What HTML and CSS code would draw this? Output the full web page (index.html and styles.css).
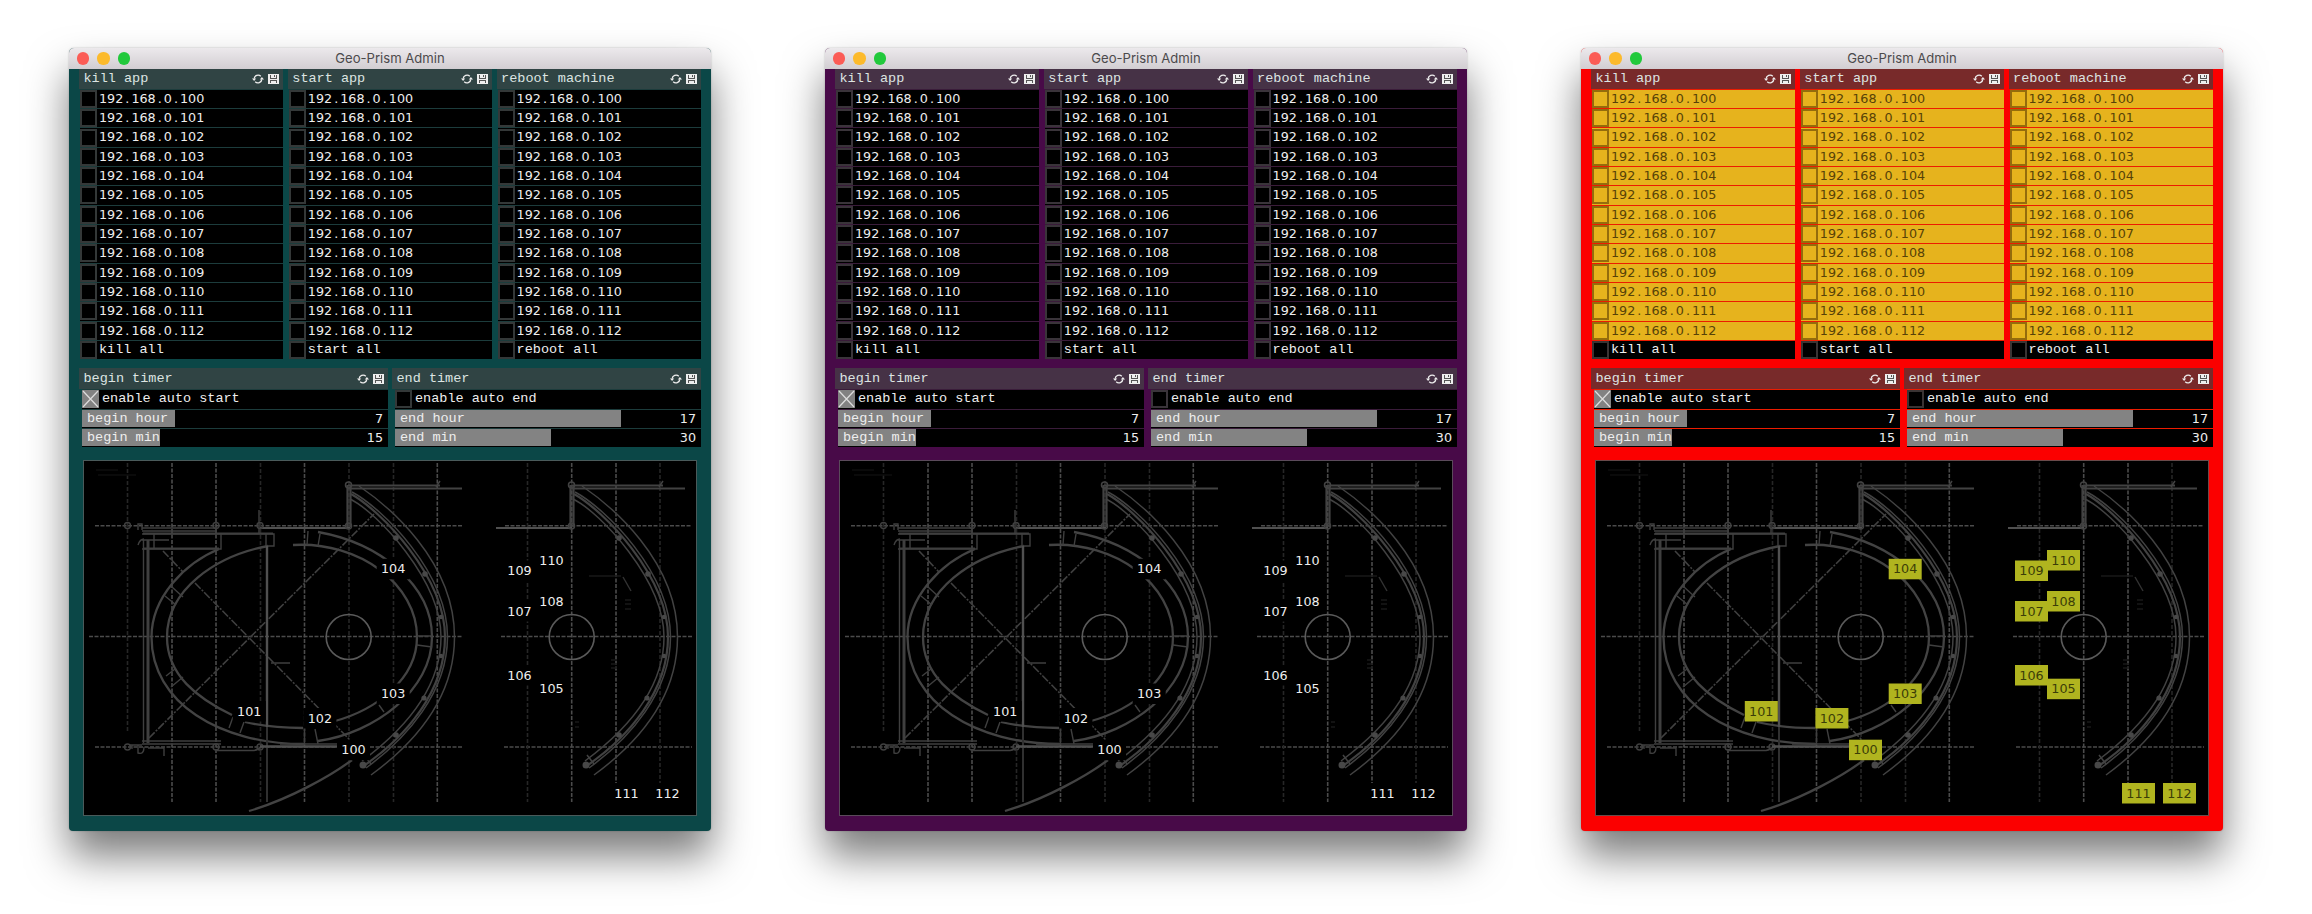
FILE: index.html
```html
<!DOCTYPE html>
<html lang="en">
<head>
<meta charset="utf-8">
<title>Geo-Prism Admin</title>
<link rel="stylesheet" href="styles.css">
</head>
<body>
<svg class="defs" width="0" height="0">
  <symbol id="refresh" viewBox="0 0 12 10">
    <path d="M2.200 4.600A3.900 3.600 0 0 1 8.800 2.200M9.800 5.400A3.900 3.600 0 0 1 3.200 7.800" fill="none" stroke="currentColor" stroke-width="1.300"/>
    <path d="M0 4.400h4.200L2.100 7zM7.800 5.600H12L9.900 3z" fill="currentColor"/>
  </symbol>
  <symbol id="save" viewBox="0 0 11 10">
    <path d="M0 0h11v10H0z" fill="currentColor"/>
    <path d="M2 1h1v3h5V1h1v4H2zM2 9V6h7v3H8V7H3v2zM6 1h1v2H6z" fill="#555"/>
  </symbol>
  <symbol id="curve" viewBox="0 0 900 900" overflow="visible">
    <g fill="none" stroke="#424242" stroke-width="1.500">
      <path d="M582 486C610 505 677.5 560 677.5 637C677.5 700 635 745 594 775"/>
      <path d="M575 492C605 508 670.5 572 670.5 637C670.5 692 630 738 589 768"/>
      <path d="M574 494C603 510 668 576 668 637C668 692 628 737 588 765" stroke-width="2.200"/>
      <path d="M573 499C600 512 664 580 664 637C664 690 624 732 585 761"/>
      <path d="M571 485.500h92M571 488.500h97M571 488.500h114" stroke-width="2"/>
      <path d="M570.500 485v42M573.500 485v42" stroke-width="2.200"/>
      <circle cx="571.500" cy="485" r="3"/><circle cx="571.500" cy="526" r="3"/>
      <path d="M663 481l-4 6M587 755l7 9"/>
    </g>
    <g fill="#484848">
      <circle cx="619" cy="538" r="2.800"/><circle cx="648" cy="574" r="2.800"/><circle cx="664" cy="617" r="2.300"/><circle cx="664" cy="656" r="2.300"/><circle cx="647" cy="698" r="2.600"/><circle cx="619" cy="735" r="2.800"/><circle cx="586" cy="765" r="3.500"/>
    </g>
  </symbol>
  <symbol id="plan" viewBox="84 461 612 354">
    <g stroke="#4b4b4b" stroke-width="1.600" stroke-dasharray="4 1.500" fill="none">
      <path d="M172 463V802M216 463V802M304.500 463V802M437.300 463V802M571.700 463V802M616 463V783"/>
      <path d="M95 525.700H463M505 525.700H692M89 636.500H463M501 636.500H692M95 747H463M504 747H692"/>
    </g>
    <g stroke="#262626" stroke-width="1.600" stroke-dasharray="4 2" fill="none">
      <path d="M127.500 463V732M260.500 463V802M349 463V802M393.500 463V802M527.500 463V802M660 463V783"/>
    </g>
    <g stroke="#404040" stroke-width="1.600" stroke-dasharray="8 1.500 2 1.500" fill="none">
      <path d="M149 738L374 514M163 551L183 572M195 583L350 740"/>
    </g>
    <g fill="none" stroke="#5a5a5a" stroke-width="1.600">
      <circle cx="348.700" cy="637" r="22.500"/><circle cx="571.700" cy="637" r="22.500"/>
      <path d="M496 528H572M260 528H350" stroke="#505050" stroke-width="2"/>
    </g>
    <use href="#curve" width="900" height="900"/>
    <use href="#curve" x="-223" width="900" height="900"/>
    <g fill="none" stroke="#434343" stroke-width="2.300">
      <path d="M219 549C185 563 151.500 597 151.500 637C151.500 703 220 744 304 744"/>
      <path d="M268 546C215 556 167 590 167 637C167 675 197 698 232 715"/>
      <path d="M245 722Q270 728 303 728"/>
      <path d="M318 532C380 543 432 585 432 637C432 690 375 733 318 741"/>
      <path d="M293 545C360 541 417 585 417 637C417 680 375 710 335 721"/>
      <path d="M249 811C290 799 332 775 352 760"/>
    </g>
    <g fill="none" stroke="#3f3f3f" stroke-width="1.400">
      <path d="M172 587l11 10M165 596l11 9M166 676l9-7M171 687l12-10M308 531l-1 14M320 534l-2 12M233 717l-4 11M244 722l-4 11M304.500 728v16M315 729l3 15M417 636h15M417 645l15 2M379 705l5 7M271 663h19"/>
      <path d="M142 528h75M142 531h75M142 534h132v12h-8v-12M142 549h79v-15M154 534v14M142 540h27M143.500 540v203M142 741h79M142 744h79M216 750.500h38q5-1 7-4M280 744h57"/>
      <path d="M259 510v24M138 530v-6h4v6M138 545q2-6 6-6M129 745h13M132 749v-4h6v8q6 2 6-6M148 748h16v8"/>
      <path d="M148 540v203" stroke-width="3"/>
      <path d="M143 548.500h76M143 533.500h130" stroke-width="2.200"/>
      <circle cx="127.500" cy="525.500" r="3"/><circle cx="216" cy="525.500" r="3"/><circle cx="260" cy="525.500" r="3"/><circle cx="127.500" cy="747" r="3"/><circle cx="216" cy="747" r="3"/><circle cx="260" cy="747" r="3"/>
    </g>
    <path d="M267 546V802" stroke="#303030" stroke-width="2"/>
    <path d="M267 546V727M260 746.500H337" stroke="#505050" stroke-width="2.400" fill="none"/>
    <g stroke="#181818" stroke-width="1.400" fill="none">
      <path d="M589 576h32M625 600h6M625 604h6M625 609h6M611 660h6M611 664h6M611 668h6M575 722h4M575 727h4"/>
      <path d="M96 470h22M98 475h38" stroke="#0e0e0e"/>
      <path d="M623 577l8 14" stroke="#333"/>
    </g>
  </symbol>
</svg>
<main class="desk" id="desk"></main>
<script src="app.js"></script>
</body>
</html>
```
FILE: styles.css
```css
body { margin: 0; background: #fff; }
.defs { position: absolute; }
.desk {
  display: flex; gap: 114px; padding: 48px 0 0 69px;
  width: 2243px; height: 866px; overflow: hidden;
}
.window {
  flex: none; width: 642px; height: 782.600px; border-radius: 5px 5px 4px 4px;
  background: var(--bg);
  box-shadow: 0 25px 42px rgba(0, 0, 0, .52), 0 0 2px rgba(0, 0, 0, .25);
  font: 13.500px/18.300px "Liberation Mono", monospace; color: #eee;
}
.teal { --bg: #0b4747; --head: #304444; --line: #1c3c3c; --frame: #4a5a5a; --box: #343838; }
.purple { --bg: #480a48; --head: #463246; --line: #3a1c3a; --frame: #5a4a5a; --box: #3a343a; }
.red { --bg: #fb0000; --head: #782a2a; --line: #ec1c00; --frame: #6a4a4a; --box: #3a3434; }

.titlebar {
  display: grid; grid-template-columns: 1fr auto 1fr; align-items: center;
  height: 20.700px; border-radius: 5px 5px 0 0;
  background: linear-gradient(#ece9ec, #d2ced2);
}
.lights { display: flex; gap: 8px; padding-left: 8px; }
.lights i { width: 12.400px; height: 12.400px; border-radius: 50%; }
.close { background: #fb5c56; }
.min { background: #fcba2c; }
.max { background: #22c93c; }
.title { margin: 0; font: 13.100px/20px Inter, sans-serif; color: #4c4a4c; }

.apps { display: grid; grid-template-columns: repeat(3, 1fr); gap: 4.400px; padding: 0 10px; }
.timers { display: grid; grid-template-columns: 309px 309px; gap: 4px; padding: 9px 10px 0; }
.head {
  display: flex; align-items: center; height: 20px; padding: 0 4px 0 4.500px;
  background: var(--head);
}
.timers .head { height: 21px; }
.head h2 { flex: 1; margin: 0; font: inherit; color: #dde4e2; }
.refresh { width: 12px; height: 10px; margin-right: 4px; }
.save { width: 11px; height: 10px; }
.rows { display: grid; gap: 1px; margin: 0 0 0 1px; padding: 1px 0 0; background: var(--line); list-style: none; }
.timers .rows { margin-left: 3px; }
.rows li { display: flex; align-items: center; height: 18.330px; background: #000; }
.apps .all { line-height: 20px; }
.check {
  flex: none; box-sizing: border-box; width: 17px; height: 18px; margin-right: 2px;
  border: 2px solid var(--box);
}
.timers .check { margin-right: 3px; }
.check.on { border: 0; background: #828282; }
.check svg { display: block; width: 17px; height: 18px; }
.ip { font: 12.740px/18.300px "DejaVu Sans", sans-serif; }
.ip b { display: inline-block; width: 8.100px; text-align: center; font-weight: inherit; }
.red .address { background: #e6b31d; color: #574208; }
.red .address .check { border-color: #946c0c; }

.rows .slider { display: block; }
.fill { height: 17px; background: #838383; }
.caption { display: flex; justify-content: space-between; margin-top: -17px; padding: 0 5px 0 5px; }
.caption .num { font: 12.740px/18.300px "DejaVu Sans", sans-serif; }

.map {
  display: block; box-sizing: border-box; width: 612px; height: 354px;
  margin: 13.500px 0 0 15px; background: #000; outline: 1px solid var(--frame);
}
.tag rect { fill: #000; }
.tag text { fill: #eee; font: 12.740px "DejaVu Sans", sans-serif; }
.red .tag rect { fill: #b0b41f; }
.red .tag text { fill: #3b3d08; }
```
FILE: app.js
```js
const themes = ['teal', 'purple', 'red'];
const apps = [['kill app', 'kill all'], ['start app', 'start all'], ['reboot machine', 'reboot all']];
const addresses = Array.from({ length: 13 }, (_, i) => `192.168.0.${100 + i}`);
const timers = [
  { name: 'begin timer', toggle: 'enable auto start', on: true, sliders: [['begin hour', 7, 23], ['begin min', 15, 59]] },
  { name: 'end timer', toggle: 'enable auto end', on: false, sliders: [['end hour', 17, 23], ['end min', 30, 59]] }
];
const tags = [
  [100, 337, 739.7], [101, 232.8, 701], [102, 303.4, 708], [103, 376.7, 683.5], [104, 376.7, 558.8],
  [106, 503, 665], [105, 535, 678.7], [107, 503, 601], [108, 535, 591], [109, 503, 560.5], [110, 535, 550],
  [111, 610, 783], [112, 651, 783]
];

const head = name => `<header class="head"><h2>${name}</h2>
  <svg class="refresh"><use href="#refresh"/></svg><svg class="save"><use href="#save"/></svg></header>`;
const check = on => on
  ? '<i class="check on"><svg viewBox="0 0 17 18"><path d="M1 1L16 17M16 1L1 17" stroke="#ddd" stroke-width="1.2"/></svg></i>'
  : '<i class="check"></i>';
const ip = a => `<li class="address">${check(false)}<span class="ip">${a.replaceAll('.', '<b>.</b>')}</span></li>`;
const appPanel = ([name, all]) => `<section>${head(name)}<ul class="rows">${addresses.map(ip).join('')}
  <li class="all">${check(false)}${all}</li></ul></section>`;
const slider = ([name, value, max]) => `<li class="slider"><div class="fill" style="width:${value / max * 100}%"></div>
  <div class="caption"><span>${name}</span><span class="num">${value}</span></div></li>`;
const timerPanel = t => `<section>${head(t.name)}<ul class="rows"><li>${check(t.on)}${t.toggle}</li>
  ${t.sliders.map(slider).join('')}</ul></section>`;
const tag = ([n, x, y]) => `<g class="tag"><rect x="${x}" y="${y}" width="33" height="20.5"/>
  <text x="${x + 4.3}" y="${y + 14.5}">${n}</text></g>`;

document.getElementById('desk').innerHTML = themes.map(theme => `
<article class="window ${theme}">
  <header class="titlebar"><div class="lights"><i class="close"></i><i class="min"></i><i class="max"></i></div>
    <h1 class="title">Geo-Prism Admin</h1><span></span></header>
  <div class="apps">${apps.map(appPanel).join('')}</div>
  <div class="timers">${timers.map(timerPanel).join('')}</div>
  <svg class="map" viewBox="84 461 612 354"><use href="#plan" x="84" y="461" width="612" height="354"/>${tags.map(tag).join('')}</svg>
</article>`).join('');
```
